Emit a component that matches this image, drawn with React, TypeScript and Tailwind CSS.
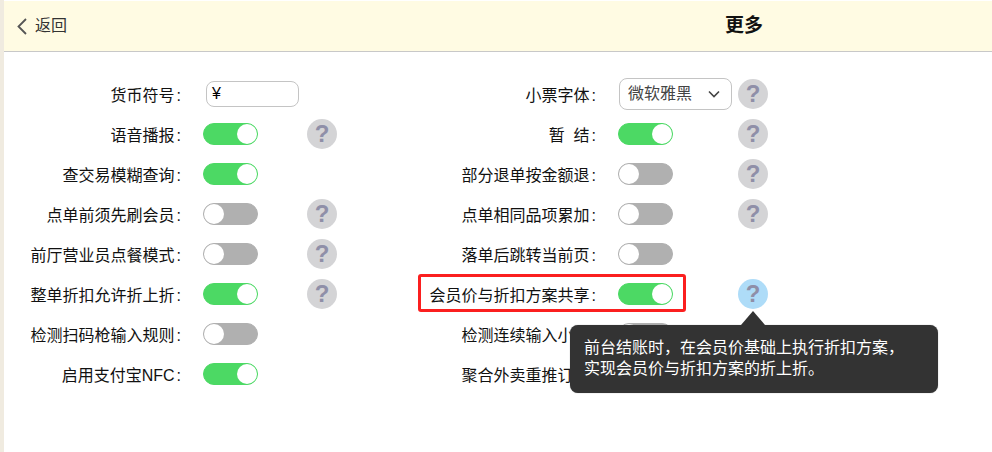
type Row = { label: string; on?: boolean; help?: boolean; active?: boolean };

const leftRows: Row[] = [
  { label: "语音播报", on: true, help: true },
  { label: "查交易模糊查询", on: true },
  { label: "点单前须先刷会员", help: true },
  { label: "前厅营业员点餐模式", help: true },
  { label: "整单折扣允许折上折", on: true, help: true },
  { label: "检测扫码枪输入规则" },
  { label: "启用支付宝NFC", on: true },
];

const rightRows: Row[] = [
  { label: "暂  结", on: true, help: true },
  { label: "部分退单按金额退", help: true },
  { label: "点单相同品项累加", help: true },
  { label: "落单后跳转当前页" },
  { label: "会员价与折扣方案共享", on: true, help: true, active: true },
  { label: "检测连续输入小票" },
  { label: "聚合外卖重推订单" },
];

function Toggle({ on }: { on?: boolean }) {
  return (
    <div
      className={`flex h-[22px] w-[55px] items-center rounded-full border ${
        on ? "justify-end border-[#4cd964] bg-[#4cd964]" : "justify-start border-[#b0b0b0] bg-[#b0b0b0]"
      }`}
    >
      <div className="size-5 rounded-full bg-white" />
    </div>
  );
}

function Help({ active }: { active?: boolean }) {
  return (
    <div
      className={`flex size-[30px] shrink-0 items-center justify-center rounded-full text-[24px] leading-none font-bold text-[#8f8fa8] ${
        active ? "bg-[#aedcf8]" : "bg-[#d4d4d6]"
      }`}
    >
      ?
    </div>
  );
}

function Label({ text }: { text: string }) {
  return (
    <div className="w-[177px] shrink-0 whitespace-pre pt-1 text-right">
      {text}
      <span className="ml-0.5">:</span>
    </div>
  );
}

function SettingRow({ row, slot }: { row: Row; slot: string }) {
  return (
    <div className="flex h-10 items-center">
      <Label text={row.label} />
      <div className={`ml-[22px] shrink-0 ${slot}`}>
        <Toggle on={row.on} />
      </div>
      {row.help && <Help active={row.active} />}
    </div>
  );
}

export default function App() {
  return (
    <div
      className="flex h-[452px] w-[992px] overflow-hidden bg-[#f0ebe0] pl-1 text-[16px] text-[#111]"
      style={{ fontFamily: '"Liberation Sans", "Noto Sans CJK SC", sans-serif' }}
    >
      <div className="flex-1 bg-white">
        <div className="mt-px flex h-[51px] items-center border-b border-[#c8c8c8] bg-[#fffbe3]">
          <div className="flex w-[100px] items-center pl-[13px] text-[#333]">
            <svg width="10" height="17" viewBox="0 0 10 17" fill="none" stroke="#555" strokeWidth="1.8">
              <path d="M9 1 1.5 8.5 9 16" />
            </svg>
            <span className="ml-2">返回</span>
          </div>
          <div className="flex-1 pl-[621px] text-[19px] font-bold text-[#111]">更多</div>
        </div>

        <div className="relative flex pt-[22px]">
          <div className="w-[415px]">
            <div className="flex h-10 items-center">
              <Label text="货币符号" />
              <div className="ml-[25px] flex h-[26px] w-[93px] items-center rounded-lg border border-[#c4c4c4] pl-[5px] text-black">
                ¥
              </div>
            </div>
            {leftRows.map((row) => (
              <SettingRow key={row.label} row={row} slot="w-[104px]" />
            ))}
          </div>

          <div className="w-[400px]">
            <div className="flex h-10 items-center">
              <Label text="小票字体" />
              <div className="ml-[23px] flex h-8 w-[113px] items-center justify-between rounded-lg border border-[#c4c4c4] pr-[10px] pl-2 text-[#444]">
                微软雅黑
                <svg width="14" height="8" viewBox="0 0 14 8" fill="none" stroke="#444" strokeWidth="1.6">
                  <path d="M2 1.5 7 6.5 12 1.5" />
                </svg>
              </div>
              <div className="ml-1.5">
                <Help />
              </div>
            </div>
            {rightRows.map((row) => (
              <SettingRow key={row.label} row={row} slot="w-[120px]" />
            ))}
          </div>

          {/* highlight round the row the tip belongs to */}
          <div className="absolute top-[222px] left-[414px] h-[38px] w-[268px] rounded-[3px] border-[3px] border-[#fb1f1f]" />

          <div className="absolute top-[273px] left-[566px] w-[368px] rounded-lg bg-[#333] px-[14px] pt-3 pb-[14px] text-[16px] leading-[21px] text-white shadow-[0_0_1px_#888]">
            <div className="absolute -top-[14px] left-[171px] size-0 border-x-[12px] border-b-[14px] border-x-transparent border-b-[#333]" />
            前台结账时，在会员价基础上执行折扣方案，
            <br />
            实现会员价与折扣方案的折上折。
          </div>
        </div>
      </div>
    </div>
  );
}
